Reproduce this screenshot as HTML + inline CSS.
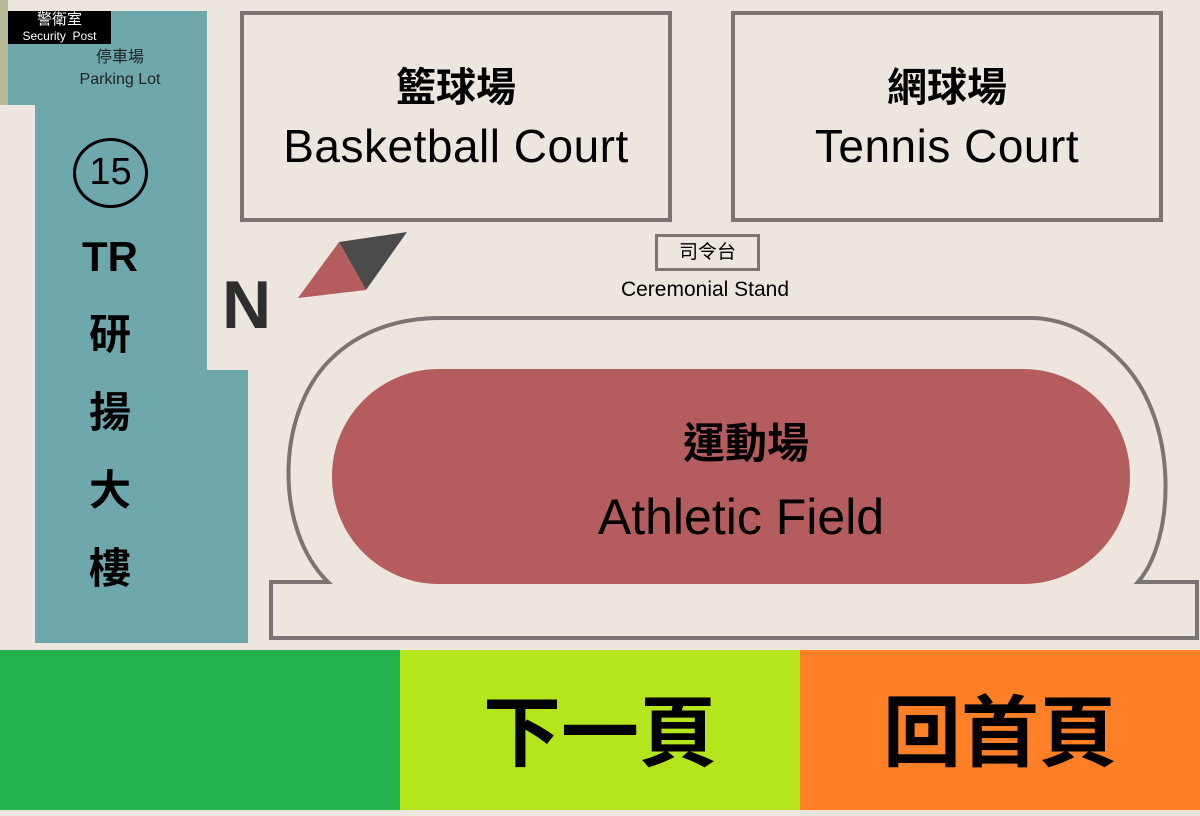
<!DOCTYPE html>
<html><head><meta charset="utf-8"><style>
*{margin:0;padding:0;box-sizing:border-box}
body{width:1200px;height:810px;background:#ede6de;position:relative;overflow:hidden;font-family:"Liberation Sans","Noto Sans CJK TC",sans-serif;color:#000}
.a{position:absolute}
.box{position:absolute;border:4px solid #7a7572;text-align:center}
.c{text-align:center}
</style></head><body>
<div class="a" style="left:0;top:0;width:8px;height:105px;background:#b9bb96"></div>
<div class="a" style="left:8px;top:11px;width:199px;height:94px;background:#6fa8ac"></div>
<div class="a" style="left:35px;top:105px;width:172px;height:266px;background:#6fa8ac"></div>
<div class="a" style="left:35px;top:370px;width:213px;height:273px;background:#6fa8ac"></div>
<div class="a c" style="left:8px;top:11px;width:103px;height:33px;background:#000;color:#fff;font-size:15px;line-height:16px;padding-top:1px;overflow:hidden">警衛室<br><span style="font-size:12px;line-height:14px">Security&nbsp; Post</span></div>
<div class="a c" style="left:40px;top:47px;width:160px;font-size:16px;line-height:22px;color:#222">停車場<br>Parking Lot</div>
<div class="a c" style="left:73px;top:138px;width:75px;height:70px;border:3px solid #000;border-radius:50%;font-size:38px;line-height:62px">15</div>
<div class="a c" style="left:60px;top:218px;width:100px;font-size:42px;line-height:78px;font-weight:bold">TR<br>研<br>揚<br>大<br>樓</div>
<div class="box" style="left:240px;top:11px;width:432px;height:211px"><div style="font-size:40px;margin-top:40px;font-weight:bold">籃球場</div><div style="font-size:46px;margin-top:6px;letter-spacing:0.5px">Basketball Court</div></div>
<div class="box" style="left:731px;top:11px;width:432px;height:211px"><div style="font-size:40px;margin-top:40px;font-weight:bold">網球場</div><div style="font-size:46px;margin-top:6px;letter-spacing:0.5px">Tennis Court</div></div>
<div class="a c" style="left:655px;top:234px;width:105px;height:37px;border:3px solid #7a7572;font-size:19px;line-height:31px">司令台</div>
<div class="a c" style="left:580px;top:278px;width:250px;font-size:21px">Ceremonial Stand</div>
<div class="a" style="left:222px;top:270px;font-size:68px;font-weight:bold;color:#2e2e2e;line-height:70px">N</div>
<svg class="a" style="left:0;top:0" width="1200" height="650">
<polygon points="339,242 407,232 366,290" fill="#4a4a4a"/>
<polygon points="298,298 339,242 366,290" fill="#b55c5e"/>
<path d="M328,582 L271,582 L271,638 L1197,638 L1197,582 L1138,582 C1175,540 1180,420 1120,360 C1090,330 1060,318 1030,318 L440,318 C400,318 360,330 330,360 C275,415 275,530 328,582 Z" fill="none" stroke="#7a7572" stroke-width="4"/>
<rect x="332" y="369" width="798" height="215" rx="107" fill="#b55c5e"/>
</svg>
<div class="a c" style="left:332px;top:410px;width:828px;font-size:42px;font-weight:bold">運動場</div>
<div class="a c" style="left:332px;top:488px;width:818px;font-size:50px">Athletic Field</div>
<div class="a" style="left:0;top:650px;width:400px;height:160px;background:#22b14c"></div>
<div class="a c" style="left:400px;top:650px;width:400px;height:160px;background:#b5e61d;font-size:78px;font-weight:bold;line-height:166px">下一頁</div>
<div class="a c" style="left:800px;top:650px;width:400px;height:160px;background:#ff7f27;font-size:78px;font-weight:bold;line-height:166px">回首頁</div>
</body></html>
